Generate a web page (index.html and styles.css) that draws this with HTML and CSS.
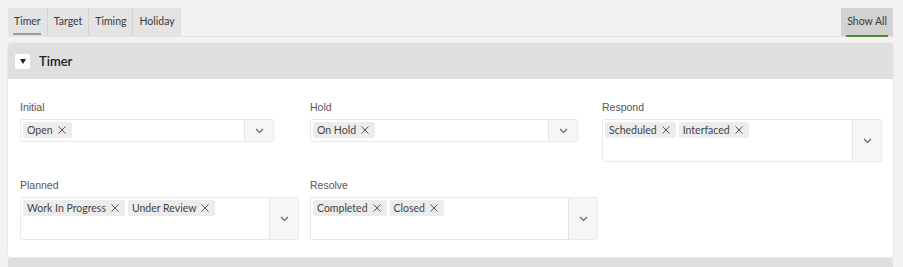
FILE: index.html
```html
<!DOCTYPE html>
<html lang="en">
<head>
  <meta charset="UTF-8" />
  <title>Timer</title>
  <link rel="stylesheet" href="styles.css">
</head>
<body>
  <div class="tabbar">
    <div class="tabs">
      <a class="tab active">Timer</a>
      <a class="tab">Target</a>
      <a class="tab">Timing</a>
      <a class="tab">Holiday</a>
    </div>
    <a class="tab show-all">Show All</a>
  </div>

  <div class="region">
    <div class="region-header">
      <button class="toggle"><span class="caret"></span></button>
      <h2>Timer</h2>
    </div>
    <div class="region-body">
      <div class="field">
        <label>Initial</label>
        <div class="select w-254">
          <div class="chips">
            <span class="chip">Open <svg class="x" width="8" height="8" viewBox="0 0 8 8"><path d="M0.5 0.5l7 7M7.5 0.5l-7 7"/></svg></span>
          </div>
          <span class="drop"><svg width="9" height="6" viewBox="0 0 9 6"><path d="M1 1l3.5 3.5L8 1" fill="none" stroke="#666" stroke-width="1.2"/></svg></span>
        </div>
      </div>
      <div class="field">
        <label>Hold</label>
        <div class="select w-268">
          <div class="chips">
            <span class="chip">On Hold <svg class="x" width="8" height="8" viewBox="0 0 8 8"><path d="M0.5 0.5l7 7M7.5 0.5l-7 7"/></svg></span>
          </div>
          <span class="drop"><svg width="9" height="6" viewBox="0 0 9 6"><path d="M1 1l3.5 3.5L8 1" fill="none" stroke="#666" stroke-width="1.2"/></svg></span>
        </div>
      </div>
      <div class="field">
        <label>Respond</label>
        <div class="select tall w-280">
          <div class="chips">
            <span class="chip">Scheduled <svg class="x" width="8" height="8" viewBox="0 0 8 8"><path d="M0.5 0.5l7 7M7.5 0.5l-7 7"/></svg></span>
            <span class="chip">Interfaced <svg class="x" width="8" height="8" viewBox="0 0 8 8"><path d="M0.5 0.5l7 7M7.5 0.5l-7 7"/></svg></span>
          </div>
          <span class="drop"><svg width="9" height="6" viewBox="0 0 9 6"><path d="M1 1l3.5 3.5L8 1" fill="none" stroke="#666" stroke-width="1.2"/></svg></span>
        </div>
      </div>
      <div class="field">
        <label>Planned</label>
        <div class="select tall w-279">
          <div class="chips">
            <span class="chip">Work In Progress <svg class="x" width="8" height="8" viewBox="0 0 8 8"><path d="M0.5 0.5l7 7M7.5 0.5l-7 7"/></svg></span>
            <span class="chip">Under Review <svg class="x" width="8" height="8" viewBox="0 0 8 8"><path d="M0.5 0.5l7 7M7.5 0.5l-7 7"/></svg></span>
          </div>
          <span class="drop"><svg width="9" height="6" viewBox="0 0 9 6"><path d="M1 1l3.5 3.5L8 1" fill="none" stroke="#666" stroke-width="1.2"/></svg></span>
        </div>
      </div>
      <div class="field">
        <label>Resolve</label>
        <div class="select tall w-288">
          <div class="chips">
            <span class="chip">Completed <svg class="x" width="8" height="8" viewBox="0 0 8 8"><path d="M0.5 0.5l7 7M7.5 0.5l-7 7"/></svg></span>
            <span class="chip">Closed <svg class="x" width="8" height="8" viewBox="0 0 8 8"><path d="M0.5 0.5l7 7M7.5 0.5l-7 7"/></svg></span>
          </div>
          <span class="drop"><svg width="9" height="6" viewBox="0 0 9 6"><path d="M1 1l3.5 3.5L8 1" fill="none" stroke="#666" stroke-width="1.2"/></svg></span>
        </div>
      </div>
    </div>
  </div>

  <div class="region-next"></div>
</body>
</html>
```

FILE: styles.css
```css
body {
  margin: 0;
  padding: 8px 10px 0 8px;
  background: #f3f2f0;
  font-family: Lato, "Liberation Sans", sans-serif;
  color: #333;
  overflow: hidden;
}

.tabbar {
  display: flex;
  justify-content: space-between;
  border-bottom: 1px solid #e6e5e3;
}

.tabs {
  display: flex;
  background: #e4e4e4;
}

.tab {
  position: relative;
  height: 28px;
  padding: 0 6px;
  line-height: 27px;
  font-size: 10.5px;
  color: #3a3a3a;
  border-left: 1px solid #d6d6d6;
}

.tab:first-child {
  border-left: none;
}

.tab.active::after {
  content: "";
  position: absolute;
  left: 5px;
  right: 6px;
  bottom: 1px;
  height: 2px;
  background: #9e9a95;
}

.show-all {
  background: #d2d2d2;
  border-left: none;
  padding: 0 6px;
}

.show-all::after {
  content: "";
  position: absolute;
  left: 5px;
  right: 5px;
  bottom: -1px;
  height: 2px;
  background: #4f8a2b;
}

.region {
  margin-top: 6px;
  background: #fff;
  border-radius: 3px;
  box-shadow: 0 0 0 1px #ebeae8;
}

.region-header {
  display: flex;
  align-items: center;
  height: 36px;
  padding: 0 7px;
  background: #dfdfdf;
  border-radius: 3px 3px 0 0;
}

.toggle {
  width: 15px;
  height: 15px;
  padding: 0;
  border: none;
  border-radius: 2px;
  background: #fff;
  display: flex;
  align-items: center;
  justify-content: center;
}

.caret {
  width: 0;
  height: 0;
  border-left: 3px solid transparent;
  border-right: 3px solid transparent;
  border-top: 5px solid #222;
}

.region-header h2 {
  margin: 0 0 0 9px;
  font-size: 13px;
  font-weight: 600;
  color: #222;
}

.region-body {
  display: grid;
  grid-template-columns: 290px 292px 1fr;
  row-gap: 17px;
  padding: 22px 11px 17px 12px;
}

.field label {
  display: block;
  height: 14px;
  margin-bottom: 4px;
  font-family: "Liberation Sans", sans-serif;
  font-size: 10.5px;
  color: #555;
}

.select {
  box-sizing: border-box;
  display: flex;
  min-height: 23px;
  border: 1px solid #eceae8;
  border-radius: 2px;
  background: #fff;
}

.select.tall {
  min-height: 43px;
}

.w-254 { width: 254px; }
.w-268 { width: 268px; }
.w-280 { width: 280px; }
.w-279 { width: 279px; }
.w-288 { width: 288px; }

.chips {
  flex: 1;
  display: flex;
  align-items: flex-start;
  gap: 3px;
  padding: 2px;
}

.chip {
  display: inline-flex;
  align-items: center;
  height: 16px;
  padding: 0 6px 0 4px;
  background: #ececec;
  border-radius: 2px;
  font-size: 10.5px;
  color: #444;
}

.chip .x {
  margin-left: 5px;
  fill: none;
  stroke: #555;
  stroke-width: 1;
}

.drop {
  width: 28px;
  display: flex;
  align-items: center;
  justify-content: center;
  background: #f7f6f5;
  border-left: 1px solid #e6e5e3;
}

.region-next {
  height: 20px;
  margin-top: 1px;
  background: #dfdfdf;
  border-radius: 3px 3px 0 0;
}
```
